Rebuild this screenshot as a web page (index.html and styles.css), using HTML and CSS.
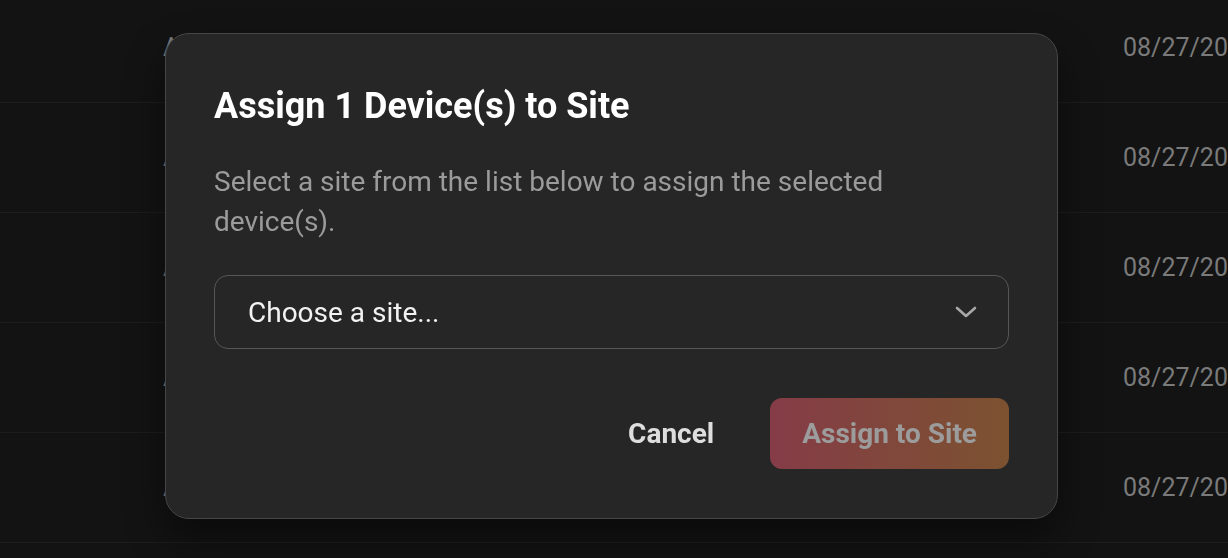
FILE: index.html
```html
<!DOCTYPE html>
<html lang="en">
<head>
<meta charset="utf-8">
<title>Assign Device</title>
<link rel="stylesheet" href="styles.css">
</head>
<body>
<div class="table">
  <div class="row"><span class="name">Acme Sensor 01</span><span class="date">08/27/2024</span></div>
  <div class="row"><span class="name">Acme Sensor 02</span><span class="date">08/27/2024</span></div>
  <div class="row"><span class="name">Acme Sensor 03</span><span class="date">08/27/2024</span></div>
  <div class="row"><span class="name">Acme Sensor 04</span><span class="date">08/27/2024</span></div>
  <div class="row"><span class="name">Acme Sensor 05</span><span class="date">08/27/2024</span></div>
</div>
<div class="overlay">
  <div class="modal">
    <h2 class="title">Assign 1 Device(s) to Site</h2>
    <p class="desc">Select a site from the list below to assign the selected device(s).</p>
    <div class="select">
      <span class="select-text">Choose a site...</span>
      <svg class="chevron" width="22" height="14" viewBox="0 0 22 14"><path d="M2 3 L11 11 L20 3" fill="none" stroke="#a8a8a8" stroke-width="2.6" stroke-linecap="round" stroke-linejoin="round"/></svg>
    </div>
    <div class="actions">
      <button class="btn-cancel">Cancel</button>
      <button class="btn-assign">Assign to Site</button>
    </div>
  </div>
</div>
</body>
</html>
```
FILE: styles.css
```css
html, body {
  margin: 0;
  padding: 0;
  height: 100%;
  overflow: hidden;
  background: #131313;
  font-family: Roboto, "Liberation Sans", sans-serif;
}
.table {
  margin-top: -7px;
}
.row {
  height: 109px;
  border-bottom: 1px solid #1d1d1d;
  display: flex;
  align-items: center;
  font-size: 25px;
  color: #7a7a7a;
  white-space: nowrap;
}
.name {
  flex-shrink: 0;
  margin-left: 163px;
  width: 960px;
}
.date {
  flex-shrink: 0;
  color: #7a7a7a;
}
.overlay {
  position: fixed;
  inset: 0;
}
.modal {
  position: absolute;
  left: 165px;
  top: 33px;
  width: 795px;
  padding: 48px 48px 49px;
  background: #262626;
  border: 1px solid #464646;
  border-radius: 24px;
  box-shadow: 0 20px 40px rgba(0,0,0,0.45);
}
.title {
  margin: 0;
  font-size: 36px;
  line-height: 48px;
  font-weight: 700;
  color: #ffffff;
}
.desc {
  margin: 32px 0 0;
  font-size: 28px;
  line-height: 40px;
  color: #9b9b9b;
  max-width: 700px;
}
.select {
  margin-top: 33px;
  height: 72px;
  border: 1px solid #565656;
  border-radius: 14px;
  display: flex;
  align-items: center;
  justify-content: space-between;
  padding: 0 31px 0 33px;
}
.select-text {
  font-size: 28px;
  color: #f2f2f2;
}
.chevron {
  display: block;
}
.actions {
  margin-top: 49px;
  display: flex;
  justify-content: flex-end;
  gap: 24px;
}
.actions button {
  font-family: Roboto, "Liberation Sans", sans-serif;
  font-size: 28px;
  font-weight: 700;
  line-height: 36px;
  border: none;
  padding: 18px 32px 17px;
  border-radius: 12px;
}
.btn-cancel {
  background: transparent;
  color: #dedede;
}
.btn-assign {
  background: linear-gradient(90deg, #853c47 0%, #7c5230 100%);
  color: #9c9c9c;
}
```
